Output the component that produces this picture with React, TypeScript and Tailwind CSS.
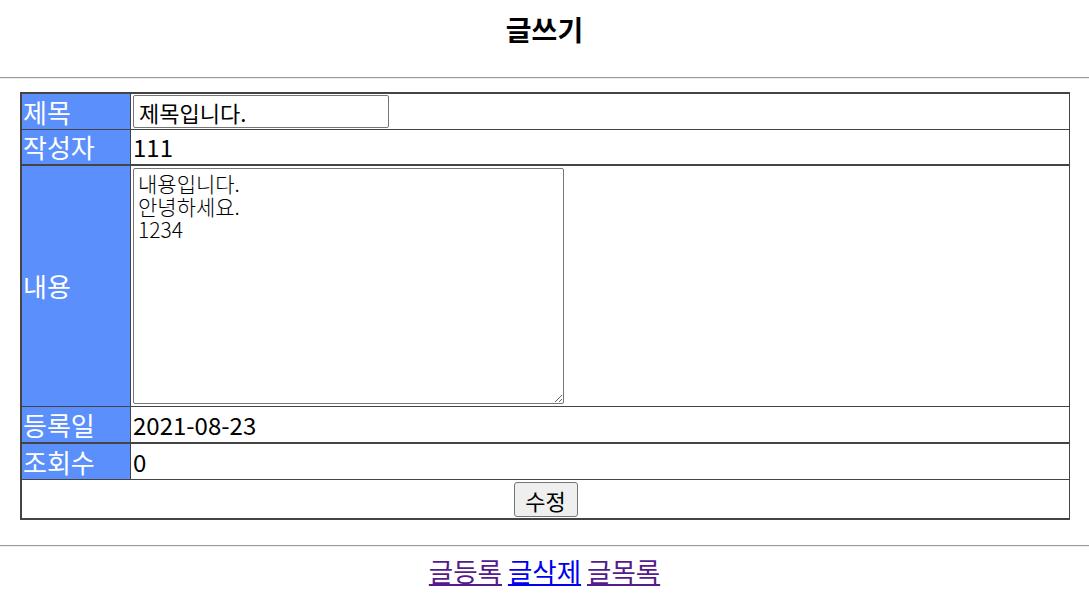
import React from "react";

const Label = ({ children }: { children: React.ReactNode }) => (
  <div className="w-[109px] shrink-0 bg-[#5b8ffc] border-r border-[#444444] flex items-center pl-[1px] text-white text-[26px] leading-[30px]">
    {children}
  </div>
);

export default function App() {
  return (
    <div
      className="bg-white text-black w-[1089px] h-[616px] overflow-hidden"
      style={{ fontFamily: '"Noto Sans CJK KR", "Noto Sans", sans-serif' }}
    >
      <h2 className="h-[77px] pt-[11px] text-center text-[28px] leading-[36px] font-bold m-0">
        글쓰기
      </h2>
      <div className="h-0 border-t border-t-[#9a9a9a] border-b border-b-[#eeeeee]" />

      <div className="mt-[13px] ml-[20px] w-[1050px] border-t-2 border-l-2 border-r border-b-2 border-[#444444]">
        {/* 제목 */}
        <div className="flex h-[36px] border-b border-[#444444]">
          <Label>제목</Label>
          <div className="flex-1 pl-[2px] pt-[1px]">
            <input
              type="text"
              defaultValue="제목입니다."
              className="block w-[256px] h-[33px] border border-[#767676] rounded-[2px] px-[5px] text-[22px] leading-[28px] text-black bg-white outline-none"
              style={{ fontFamily: '"Noto Sans CJK KR", sans-serif' }}
            />
          </div>
        </div>

        {/* 작성자 */}
        <div className="flex h-[36px] border-b-2 border-[#444444]">
          <Label>작성자</Label>
          <div className="flex-1 pl-[2px] flex items-center text-[24px] leading-[30px]">111</div>
        </div>

        {/* 내용 */}
        <div className="flex h-[241px] border-b border-[#444444]">
          <Label>내용</Label>
          <div className="flex-1 pl-[2px] pt-[2px]">
            <textarea
              defaultValue={"내용입니다.\n안녕하세요.\n1234"}
              className="block w-[431px] h-[236px] border border-[#767676] rounded-[2px] px-[4px] pt-[3px] text-[21px] leading-[23px] font-light text-black bg-white outline-none"
              style={{ fontFamily: '"Noto Sans CJK KR", sans-serif' }}
            />
          </div>
        </div>

        {/* 등록일 */}
        <div className="flex h-[37px] border-b-2 border-[#444444]">
          <Label>등록일</Label>
          <div className="flex-1 pl-[2px] flex items-center text-[24px] leading-[30px]">2021-08-23</div>
        </div>

        {/* 조회수 */}
        <div className="flex h-[36px] border-b border-[#444444]">
          <Label>조회수</Label>
          <div className="flex-1 pl-[2px] flex items-center text-[24px] leading-[30px]">0</div>
        </div>

        {/* 버튼 */}
        <div className="flex h-[38px] justify-center pt-[2px]">
          <button
            type="button"
            className="w-[64px] h-[35px] bg-[#efefef] border border-[#767676] rounded-[3px] text-[22px] leading-[28px] text-black"
            style={{ fontFamily: '"Noto Sans CJK KR", sans-serif' }}
          >
            수정
          </button>
        </div>
      </div>

      <div className="mt-[25px] h-0 border-t border-t-[#9a9a9a] border-b border-b-[#eeeeee]" />

      <div className="mt-[8px] text-center text-[26.5px] leading-[32px]">
        <a href="#" className="underline text-[#551a8b]">글등록</a>{" "}
        <a href="#" className="underline text-[#0000ee]">글삭제</a>{" "}
        <a href="#" className="underline text-[#551a8b]">글목록</a>
      </div>
    </div>
  );
}
